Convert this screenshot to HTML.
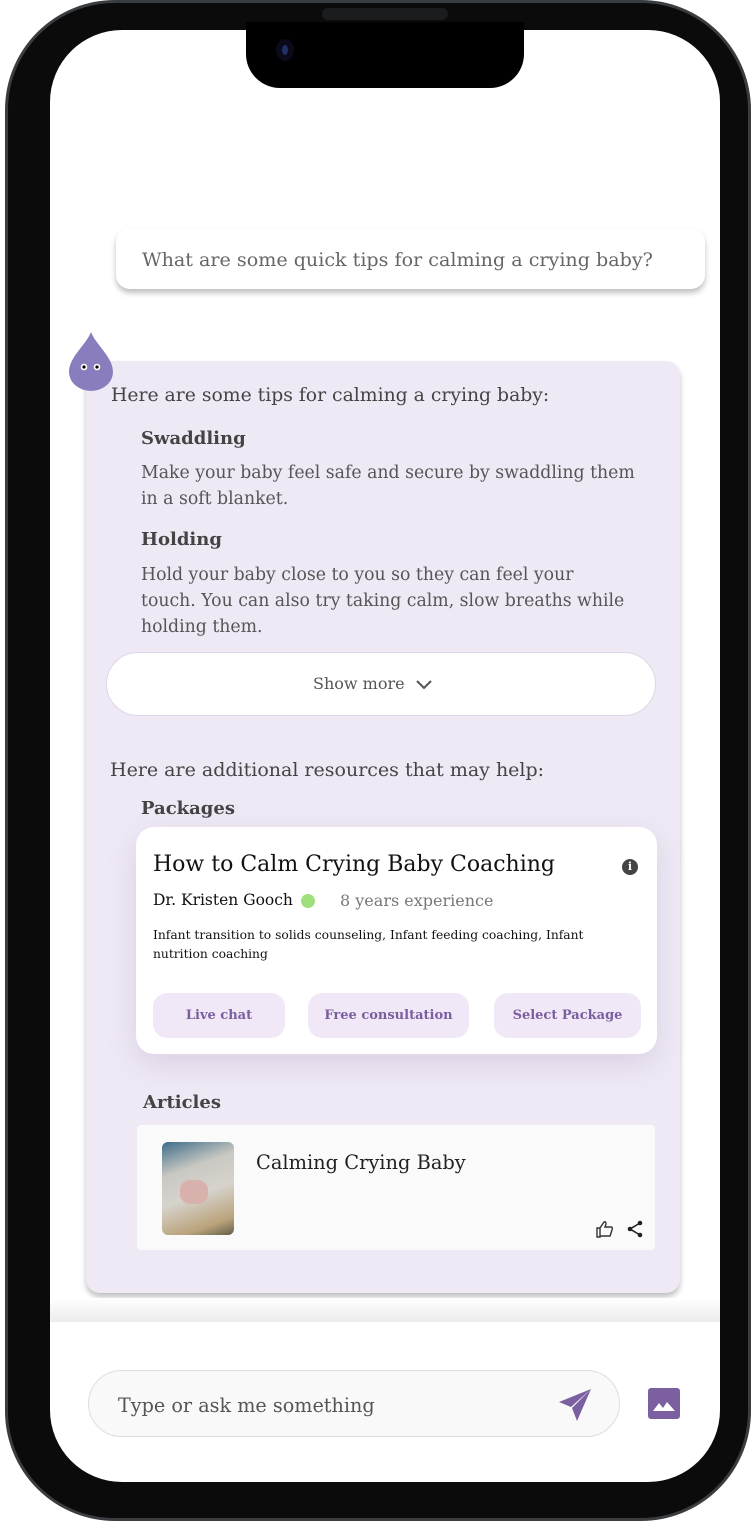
<!DOCTYPE html>
<html><head><meta charset="utf-8"><style>
*{margin:0;padding:0;box-sizing:border-box}
body{width:756px;height:1522px;background:#fff;position:relative;overflow:hidden;font-family:"DejaVu Serif","Liberation Serif",serif;}
.abs{position:absolute}
.phone{left:5px;top:0;width:746px;height:1521px;background:#0b0b0c;border-radius:110px;border:3px solid #3a3d40}
.screen{left:50px;top:30px;width:670px;height:1452px;background:#fff;border-radius:72px;overflow:hidden}
.notch{left:246px;top:22px;width:278px;height:66px;background:#000;border-radius:0 0 34px 34px}
.t{position:absolute;white-space:nowrap}
.btn{position:absolute;top:993px;height:45px;background:#f0e8f6;border-radius:14px;color:#7a5ea0;font-size:13px;font-weight:bold;display:flex;align-items:center;justify-content:center}
</style></head><body>
<div class="abs phone"></div>
<div class="abs screen"></div>
<div class="abs notch"></div>
<div class="abs" style="left:322px;top:8px;width:126px;height:12px;background:#1a1c1e;border-radius:6px"></div>
<div class="abs" style="left:276px;top:39px;width:18px;height:22px;border-radius:50%;background:#0a0a1a"></div>
<div class="abs" style="left:282px;top:45px;width:6px;height:10px;border-radius:50%;background:#223066"></div>

<div class="abs" style="left:116px;top:228px;width:589px;height:61px;background:#fff;border-radius:14px;box-shadow:0 4px 6px rgba(0,0,0,.25)"></div>
<div class="t" style="left:142px;top:248px;font-size:19.1px;color:#666">What are some quick tips for calming a crying baby?</div>

<div class="abs" style="left:86px;top:361px;width:594px;height:932px;background:#efe9f5;border-radius:14px;box-shadow:0 4px 6px rgba(0,0,0,.25)"></div>
<svg class="abs" style="left:68px;top:331px" width="46" height="60" viewBox="0 0 46 60"><path d="M23 1 C18 14 1 26 1 41 A22 19 0 0 0 45 41 C45 26 28 14 23 1Z" fill="#8a7dbd"/><circle cx="16" cy="36" r="3.3" fill="#fff"/><circle cx="29" cy="36" r="3.3" fill="#fff"/><circle cx="16" cy="36" r="1.6" fill="#000"/><circle cx="29" cy="36" r="1.6" fill="#000"/></svg>

<div class="t" style="left:111px;top:385px;font-size:18.8px;color:#444">Here are some tips for calming a crying baby:</div>
<div class="t" style="left:141px;top:428px;font-size:18px;color:#444;font-weight:bold">Swaddling</div>
<div class="t" style="left:141px;top:460px;font-size:17.3px;color:#555;line-height:26px">Make your baby feel safe and secure by swaddling them<br>in a soft blanket.</div>
<div class="t" style="left:141px;top:529px;font-size:18px;color:#444;font-weight:bold">Holding</div>
<div class="t" style="left:141px;top:562px;font-size:17.3px;color:#555;line-height:26px">Hold your baby close to you so they can feel your<br>touch. You can also try taking calm, slow breaths while<br>holding them.</div>

<div class="abs" style="left:106px;top:652px;width:550px;height:64px;background:#fff;border-radius:32px;border:1px solid #ddd6e6"></div>
<div class="t" style="left:313px;top:674px;font-size:16px;color:#555">Show more</div>
<svg class="abs" style="left:415px;top:679px" width="18" height="12"><path d="M2 2 L9 9 L16 2" stroke="#555" stroke-width="2" fill="none"/></svg>

<div class="t" style="left:110px;top:759px;font-size:19px;color:#444">Here are additional resources that may help:</div>
<div class="t" style="left:141px;top:798px;font-size:18px;color:#444;font-weight:bold">Packages</div>

<div class="abs" style="left:136px;top:827px;width:521px;height:227px;background:#fff;border-radius:18px;box-shadow:0 10px 30px rgba(120,100,140,.18)"></div>
<div class="t" style="left:153px;top:852px;font-size:22px;color:#111">How to Calm Crying Baby Coaching</div>
<div class="abs" style="left:622px;top:859px;width:16px;height:16px;border-radius:50%;background:#444;color:#fff;font-size:11px;font-weight:bold;text-align:center;line-height:16px">i</div>
<div class="t" style="left:153px;top:891px;font-size:15.5px;color:#111">Dr. Kristen Gooch</div>
<div class="abs" style="left:301px;top:894px;width:14px;height:14px;border-radius:50%;background:#9fe07c"></div>
<div class="t" style="left:340px;top:891px;font-size:16px;color:#777">8 years experience</div>
<div class="t" style="left:153px;top:926px;font-size:12.3px;color:#111;line-height:19px">Infant transition to solids counseling, Infant feeding coaching, Infant<br>nutrition coaching</div>
<div class="btn" style="left:153px;width:132px">Live chat</div>
<div class="btn" style="left:308px;width:161px">Free consultation</div>
<div class="btn" style="left:494px;width:147px">Select Package</div>

<div class="t" style="left:143px;top:1092px;font-size:18px;color:#444;font-weight:bold">Articles</div>
<div class="abs" style="left:137px;top:1125px;width:518px;height:125px;background:#fafafa;border-radius:4px"></div>
<div class="abs" style="left:162px;top:1142px;width:72px;height:93px;border-radius:6px;background:linear-gradient(160deg,#3d6d8a 0%,#c9c8c2 30%,#d6d3cc 55%,#b9a27a 85%,#5f5f4a 100%)"></div>
<div class="abs" style="left:180px;top:1180px;width:28px;height:24px;border-radius:40%;background:#d8b0ac"></div>
<div class="t" style="left:256px;top:1151px;font-size:19.4px;color:#222">Calming Crying Baby</div>
<svg class="abs" style="left:596px;top:1220px" width="18" height="18" viewBox="0 0 18 18"><path d="M1 8h3v9H1z M4 8 L8 2 Q10 1 10 4 L9 7 H15 Q17 7 16 10 L14 16 H4" fill="none" stroke="#333" stroke-width="1.4"/></svg>
<svg class="abs" style="left:626px;top:1220px" width="18" height="18" viewBox="0 0 18 18"><circle cx="14" cy="3" r="2.3" fill="#222"/><circle cx="4" cy="9" r="2.3" fill="#222"/><circle cx="14" cy="15" r="2.3" fill="#222"/><path d="M14 3 L4 9 L14 15" stroke="#222" stroke-width="1.6" fill="none"/></svg>

<div class="abs" style="left:50px;top:1298px;width:670px;height:24px;background:linear-gradient(#fff,#ececec)"></div>
<div class="abs" style="left:88px;top:1370px;width:532px;height:67px;background:#f9f9f9;border:1.5px solid #dedede;border-radius:34px"></div>
<div class="t" style="left:118px;top:1394px;font-size:19.2px;color:#555">Type or ask me something</div>
<svg class="abs" style="left:558px;top:1388px" width="34" height="34" viewBox="0 0 34 34"><path d="M33 1 L1 14 L13 19 Z M33 1 L19 33 L14 20 Z" fill="#7b5fa0"/></svg>
<div class="abs" style="left:648px;top:1388px;width:32px;height:31px;background:#7b5fa0;border-radius:3px"></div>
<svg class="abs" style="left:648px;top:1388px" width="32" height="31"><path d="M5 23 L11 15 L15 20 L19 14 L27 23Z" fill="#fff"/></svg>
</body></html>
